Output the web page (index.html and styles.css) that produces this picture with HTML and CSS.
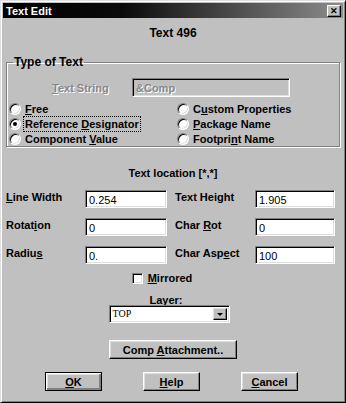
FILE: index.html
```html
<!DOCTYPE html>
<html lang="en">
<head>
  <meta charset="UTF-8">
  <title>Text Edit</title>
  <link rel="stylesheet" href="styles.css">
</head>
<body>
  <div class="window">
    <div class="titlebar">
      <span class="title">Text Edit</span>
      <span class="close">&#x2715;</span>
    </div>

    <div class="content">
      <div class="heading">Text 496</div>

      <fieldset class="group">
        <legend>Type of Text</legend>
        <div class="string-row">
          <span class="disabled-label"><u>T</u>ext String</span>
          <span class="field disabled">&amp;Comp</span>
        </div>
        <div class="radios">
          <label class="radio-item"><span class="radio"></span><span><u>F</u>ree</span></label>
          <label class="radio-item"><span class="radio"></span><span>C<u>u</u>stom Properties</span></label>
          <label class="radio-item"><span class="radio checked"></span><span class="focus">Reference <u>D</u>esignator</span></label>
          <label class="radio-item"><span class="radio"></span><span><u>P</u>ackage Name</span></label>
          <label class="radio-item"><span class="radio"></span><span>Component <u>V</u>alue</span></label>
          <label class="radio-item"><span class="radio"></span><span>Footpri<u>n</u>t Name</span></label>
        </div>
      </fieldset>

      <div class="section-title">Text location [*,*]</div>

      <div class="fields">
        <span class="lbl"><u>L</u>ine Width</span>
        <span class="field">0.254</span>
        <span class="lbl">Text Height</span>
        <span class="field">1.905</span>

        <span class="lbl">Rotat<u>i</u>on</span>
        <span class="field">0</span>
        <span class="lbl">Char <u>R</u>ot</span>
        <span class="field">0</span>

        <span class="lbl">Radiu<u>s</u></span>
        <span class="field">0.</span>
        <span class="lbl">Char Asp<u>e</u>ct</span>
        <span class="field">100</span>
      </div>

      <div class="mirror-row">
        <span class="checkbox"></span><span><u>M</u>irrored</span>
      </div>

      <div class="layer">
        <span class="layer-label"><u>L</u>ayer:</span>
        <div class="select">
          <span class="select-value">TOP</span>
          <span class="select-btn"><span class="arrow"></span></span>
        </div>
      </div>

      <div class="attach-row">
        <button class="btn attach">Comp <u>A</u>ttachment..</button>
      </div>

      <div class="buttons">
        <button class="btn default"><u>O</u>K</button>
        <button class="btn"><u>H</u>elp</button>
        <button class="btn"><u>C</u>ancel</button>
      </div>
    </div>
  </div>
</body>
</html>
```

FILE: styles.css
```css
body {
  margin: 0;
  padding: 0;
  background: #c0c0c0;
  font-family: "Liberation Sans", Arial, sans-serif;
  font-size: 11px;
  font-weight: bold;
  color: #000;
}
u {
  text-decoration: underline;
  text-underline-offset: 1px;
}
.window {
  width: 346px;
  height: 403px;
  box-sizing: border-box;
  background: #c0c0c0;
  border: 1px solid;
  border-color: #dfdfdf #000 #000 #dfdfdf;
  box-shadow: inset 1px 1px #fff, inset -1px -1px #808080;
  padding: 2px;
  display: flex;
  flex-direction: column;
}
.titlebar {
  height: 15px;
  background: linear-gradient(to right, #000 0%, #0a0a0a 35%, #8c8c8c 100%);
  display: flex;
  align-items: center;
  justify-content: space-between;
  padding: 0 2px 0 2px;
}
.title {
  color: #fff;
  font-size: 11px;
  padding-left: 1px;
}
.close {
  width: 12px;
  height: 10px;
  background: #c0c0c0;
  border: 1px solid;
  border-color: #fff #000 #000 #fff;
  box-shadow: inset -1px -1px #808080;
  font-size: 9px;
  line-height: 10px;
  text-align: center;
  color: #000;
}
.content {
  padding: 0 3px;
  display: flex;
  flex-direction: column;
}
.heading {
  text-align: center;
  font-size: 12px;
  margin-top: 8px;
  height: 14px;
  line-height: 14px;
}
.group {
  margin: 16px 0 0 0;
  padding: 0 2px 0 2px;
  border: 1px solid #808080;
  box-shadow: 1px 1px 0 #fff, inset 1px 1px 0 #fff;
  min-width: 0;
}
.group legend {
  padding: 0 1px;
  margin-left: 4px;
  font-size: 12px;
  line-height: 12px;
}
.string-row {
  display: flex;
  align-items: center;
  margin-top: 10px;
}
.disabled-label {
  color: #888;
  text-shadow: 1px 1px 0 #fff;
  margin-left: 43px;
  width: 80px;
}
.field {
  box-sizing: border-box;
  height: 18px;
  line-height: 14px;
  padding: 2px 3px;
  background: #fff;
  border: 1px solid;
  border-color: #808080 #fff #fff #808080;
  box-shadow: inset 1px 1px #000, inset -1px -1px #dfdfdf;
  font-weight: normal;
  font-size: 11px;
}
.field.disabled {
  width: 158px;
  height: 19px;
  background: #c0c0c0;
  color: #888;
  font-weight: bold;
  text-shadow: 1px 1px 0 #fff;
}
.radios {
  display: grid;
  grid-template-columns: 168px 1fr;
  grid-auto-rows: 15px;
  margin-top: 4px;
}
.radio-item {
  display: flex;
  align-items: center;
  gap: 4px;
}
.radio {
  position: relative;
  box-sizing: border-box;
  width: 12px;
  height: 12px;
  border-radius: 50%;
  background: #fff;
  border: 1px solid;
  border-color: #808080 #fff #fff #808080;
  box-shadow: inset 1px 1px #000, inset -1px -1px #dfdfdf;
}
.radio.checked::after {
  content: "";
  position: absolute;
  left: 3px;
  top: 3px;
  width: 4px;
  height: 4px;
  border-radius: 50%;
  background: #000;
}
.focus {
  outline: 1px dotted #000;
  outline-offset: 1px;
}
.section-title {
  text-align: center;
  margin-top: 19px;
  height: 14px;
  line-height: 14px;
}
.fields {
  display: grid;
  grid-template-columns: 79px 82px 88px 80px;
  grid-auto-rows: 18px;
  row-gap: 10px;
  align-items: center;
  margin-top: 10px;
}
.fields .field {
  width: 100%;
}
.fields .lbl {
  padding-bottom: 4px;
}
.fields .lbl:nth-child(4n+3) {
  padding-left: 8px;
}
.mirror-row {
  display: flex;
  justify-content: center;
  align-items: center;
  gap: 5px;
  margin-top: 7px;
  padding-right: 22px;
  height: 14px;
}
.checkbox {
  box-sizing: border-box;
  width: 11px;
  height: 11px;
  background: #fff;
  border: 1px solid;
  border-color: #808080 #fff #fff #808080;
  box-shadow: inset 1px 1px #000, inset -1px -1px #dfdfdf;
}
.layer {
  display: flex;
  flex-direction: column;
  align-items: center;
  margin-top: 10px;
  padding-right: 8px;
}
.layer-label {
  height: 10px;
  line-height: 10px;
  margin-right: 6px;
}
.select {
  box-sizing: border-box;
  width: 121px;
  height: 18px;
  display: flex;
  background: #fff;
  border: 1px solid;
  border-color: #808080 #fff #fff #808080;
  box-shadow: inset 1px 1px #000, inset -1px -1px #dfdfdf;
  padding: 2px 2px 2px 3px;
}
.select-value {
  flex: 1;
  font-family: "Liberation Serif", "Times New Roman", serif;
  font-weight: normal;
  font-size: 10px;
  line-height: 12px;
}
.select-btn {
  box-sizing: border-box;
  width: 14px;
  height: 12px;
  background: #c0c0c0;
  border: 1px solid;
  border-color: #dfdfdf #000 #000 #dfdfdf;
  box-shadow: inset -1px -1px #808080;
  display: flex;
  align-items: center;
  justify-content: center;
}
.arrow {
  width: 0;
  height: 0;
  border-left: 3px solid transparent;
  border-right: 3px solid transparent;
  border-top: 3px solid #000;
}
.attach-row {
  display: flex;
  justify-content: center;
  margin-top: 17px;
}
.btn {
  box-sizing: border-box;
  height: 19px;
  padding: 0;
  background: #c0c0c0;
  border: 1px solid;
  border-color: #fff #000 #000 #fff;
  box-shadow: inset -1px -1px #808080, inset 1px 1px #dfdfdf;
  font-family: "Liberation Sans", Arial, sans-serif;
  font-size: 11px;
  font-weight: bold;
  color: #000;
}
.attach {
  width: 128px;
}
.buttons {
  display: flex;
  justify-content: space-between;
  padding: 0 42px 0 39px;
  margin-top: 13px;
}
.buttons .btn {
  width: 57px;
}
.btn.default {
  border: 1px solid #000;
  box-shadow: inset 1px 1px #fff, inset -2px -2px #808080, inset 2px 2px #dfdfdf;
}
```
